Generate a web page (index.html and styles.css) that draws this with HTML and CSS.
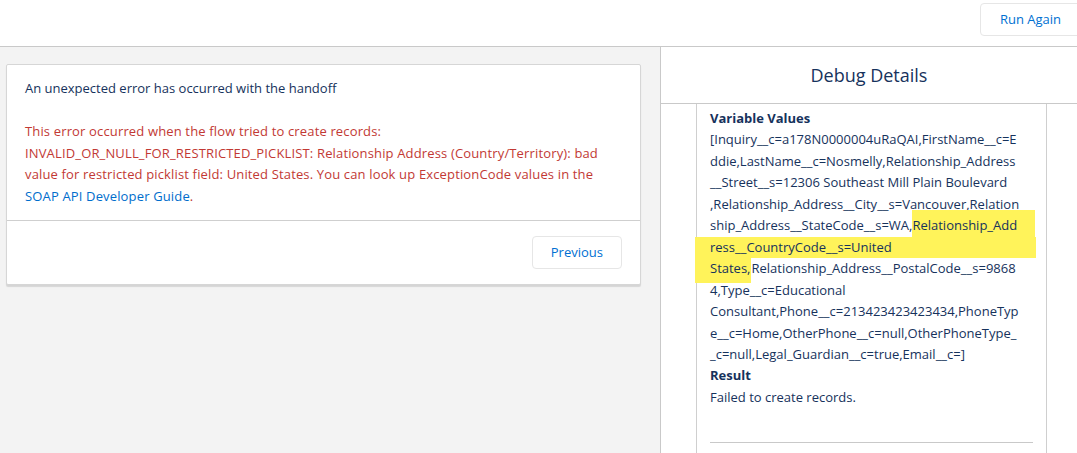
FILE: index.html
```html
<!DOCTYPE html>
<html lang="en">
<head>
<meta charset="utf-8">
<title>Flow Debug</title>
<link rel="stylesheet" href="styles.css">
</head>
<body>
<div class="app">
  <header class="topbar">
    <button class="btn btn-run">Run Again</button>
  </header>
  <div class="main">
    <section class="canvas">
      <div class="card">
        <div class="card-body">
          <p class="msg">An unexpected error has occurred with the handoff</p>
          <p class="error">This error occurred when the flow tried to create records:<br>INVALID_OR_NULL_FOR_RESTRICTED_PICKLIST: Relationship Address (Country/Territory): bad<br>value for restricted picklist field: United States. You can look up ExceptionCode values in the<br><a href="#" class="link">SOAP API Developer Guide</a>.</p>
        </div>
        <div class="card-footer">
          <button class="btn">Previous</button>
        </div>
      </div>
    </section>
    <aside class="debug">
      <h2 class="debug-title">Debug Details</h2>
      <div class="debug-scroll">
        <div class="debug-box">
          <div class="label">Variable Values</div>
          <div class="line">[Inquiry__c=a178N0000004uRaQAI,FirstName__c=E</div>
          <div class="line">ddie,LastName__c=Nosmelly,Relationship_Address</div>
          <div class="line">__Street__s=12306 Southeast Mill Plain Boulevard</div>
          <div class="line">,Relationship_Address__City__s=Vancouver,Relation</div>
          <div class="line">ship_Address__StateCode__s=WA,<span class="hl hl-a">Relationship_Add</span></div>
          <div class="line"><span class="hl hl-b">ress__CountryCode__s=United</span></div>
          <div class="line"><span class="hl hl-c">States,</span>Relationship_Address__PostalCode__s=9868</div>
          <div class="line">4,Type__c=Educational</div>
          <div class="line">Consultant,Phone__c=213423423423434,PhoneTyp</div>
          <div class="line">e__c=Home,OtherPhone__c=null,OtherPhoneType_</div>
          <div class="line">_c=null,Legal_Guardian__c=true,Email__c=]</div>
          <div class="label">Result</div>
          <div class="line">Failed to create records.</div>
          <hr class="divider">
        </div>
      </div>
    </aside>
  </div>
</div>
</body>
</html>
```
FILE: styles.css
```css
* { box-sizing: border-box; }
html, body {
  margin: 0;
  padding: 0;
  height: 453px;
  overflow: hidden;
  background: #fff;
}
body {
  font-family: "Open Sans", "Noto Sans", sans-serif;
  font-size: 13px;
  color: #16325c;
}
.app {
  display: flex;
  flex-direction: column;
  height: 453px;
}
.topbar {
  height: 47px;
  flex: none;
  border-bottom: 1px solid #c9c9c9;
  display: flex;
  justify-content: flex-end;
  align-items: flex-start;
  padding-top: 3px;
}
.btn {
  font-family: inherit;
  font-size: 13px;
  color: #0070d2;
  background: #fff;
  border: 1px solid #e6e6e6;
  border-radius: 4px;
  height: 33px;
  padding: 0 18px;
  cursor: pointer;
  line-height: 31px;
}
.btn-run {
  padding: 0 19px;
  margin-right: -4px;
}
.main {
  flex: 1;
  display: flex;
  min-height: 0;
}
.canvas {
  width: 660px;
  flex: none;
  background: #f3f3f3;
  padding: 17px 19px 0 6px;
}
.card {
  background: #fff;
  border: 1px solid #d6d6d6;
  border-radius: 2px;
  box-shadow: 0 2px 1px rgba(0, 0, 0, 0.12);
}
.card-body {
  padding: 13px 18px 13px;
  line-height: 21.5px;
}
.card-body p {
  margin: 0;
}
.msg {
  margin-bottom: 21.5px !important;
  color: #16325c;
}
.error {
  color: #c23934;
  letter-spacing: 0.15px;
}
.link {
  color: #006dcc;
  text-decoration: none;
}
.card-footer {
  border-top: 1px solid #cfcfcf;
  padding: 15px 18px 15px;
  display: flex;
  justify-content: flex-end;
}
.debug {
  flex: 1;
  border-left: 1px solid #c9c9c9;
  display: flex;
  flex-direction: column;
  min-width: 0;
}
.debug-title {
  margin: 0;
  height: 57px;
  flex: none;
  border-bottom: 1px solid #c9c9c9;
  display: flex;
  align-items: center;
  justify-content: center;
  font-size: 18px;
  font-weight: 400;
  color: #16325c;
  padding-bottom: 1px;
}
.debug-scroll {
  flex: 1;
  padding: 0 30px 0 35px;
  overflow: hidden;
}
.debug-box {
  border-left: 1px solid #cfcfcf;
  border-right: 1px solid #cfcfcf;
  padding: 4px 13px 20px;
  min-height: 100%;
  line-height: 21.46px;
  white-space: nowrap;
}
.label {
  font-weight: 700;
}
.line {
  color: #16325c;
}
.hl {
  background: #fff35a;
  padding: 4px 0 5px;
}
.hl-a {
  padding-right: 18px;
  padding-top: 6px;
}
.hl-b {
  display: inline-block;
  margin-left: -15px;
  padding: 0 0 0 15px;
  width: 341px;
  line-height: 21.46px;
}
.hl-c {
  margin-left: -15px;
  padding: 4px 1px 6px 15px;
}
.divider {
  margin: 34px 0 0;
  border: 0;
  border-top: 1px solid #c9c9c9;
}
```
